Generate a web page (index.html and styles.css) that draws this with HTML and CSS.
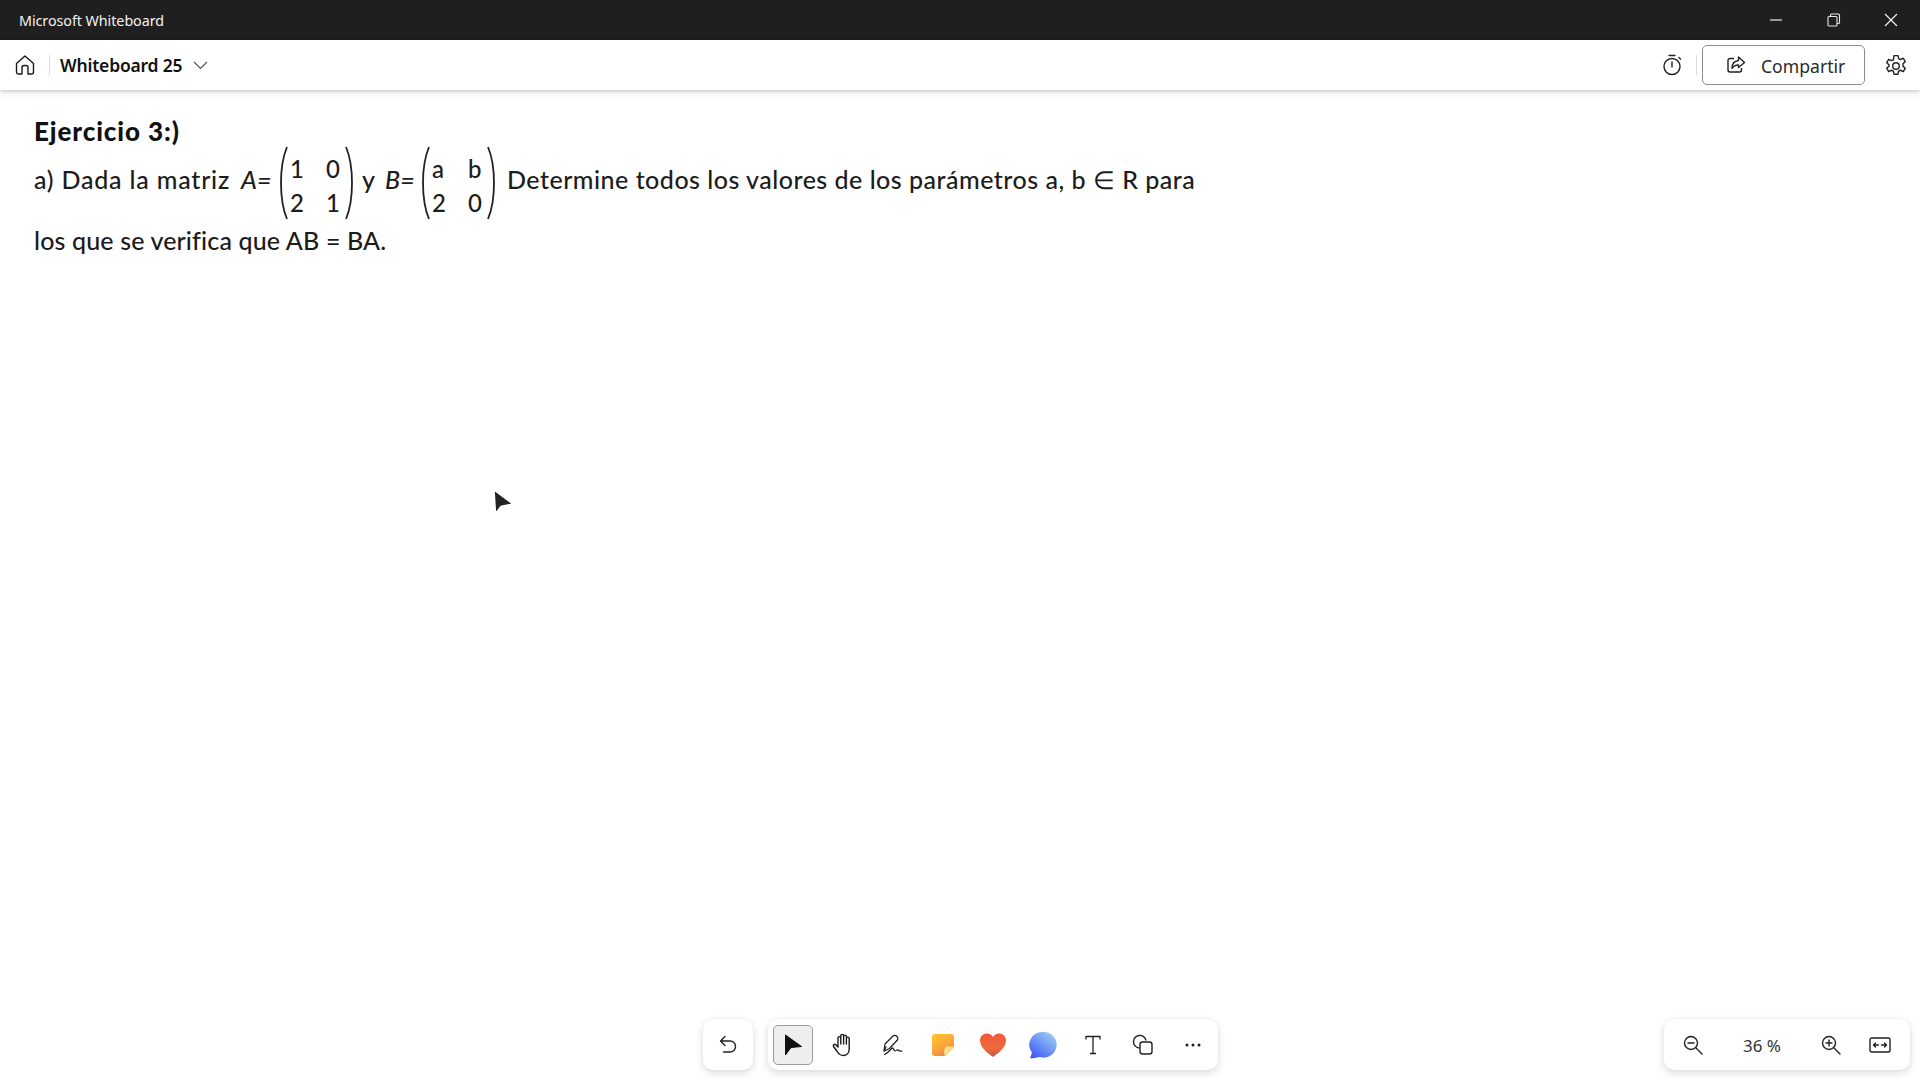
FILE: index.html
```html
<!DOCTYPE html>
<html lang="es">
<head>
<meta charset="utf-8">
<title>Microsoft Whiteboard</title>
<link rel="stylesheet" href="styles.css">
</head>
<body>
<div class="app">
  <header class="titlebar">
    <span class="app-name">Microsoft Whiteboard</span>
    <div class="win-controls">
      <span class="win-btn"><svg width="14" height="14" viewBox="0 0 14 14"><path d="M1 7h12" stroke="#d8d8d8" stroke-width="1.3"/></svg></span>
      <span class="win-btn"><svg width="14" height="14" viewBox="0 0 14 14" fill="none" stroke="#e8e8e8" stroke-width="1.1"><rect x="1" y="3.5" width="9" height="9.5" rx="1"/><path d="M3.5 3.5V2a1 1 0 0 1 1-1h7a1 1 0 0 1 1 1v7.500a1 1 0 0 1-1 1H10"/></svg></span>
      <span class="win-btn"><svg width="14" height="14" viewBox="0 0 14 14"><path d="M1 1l12 12M13 1L1 13" stroke="#f0f0f0" stroke-width="1.2"/></svg></span>
    </div>
  </header>
  <nav class="appbar">
    <svg class="home" width="20" height="22" viewBox="0 0 20 22" fill="none" stroke="#1a1a1a" stroke-width="1.4" stroke-linejoin="round"><path d="M1.500 9.500 10 2l8.500 7.500V18a2 2 0 0 1-2 2H13v-6.500a2 2 0 0 0-2-2H9a2 2 0 0 0-2 2V20H3.500a2 2 0 0 1-2-2z"/></svg>
    <span class="sep"></span>
    <span class="board-name">Whiteboard 25</span>
    <svg class="chev" width="15" height="9" viewBox="0 0 15 9" fill="none" stroke="#555" stroke-width="1.2"><path d="M1 1l6.500 6.500L14 1"/></svg>
    <span class="spacer"></span>
    <svg class="timer" width="20" height="22" viewBox="0 0 20 22" fill="none" stroke="#1f1f1f" stroke-width="1.4"><circle cx="10" cy="12.500" r="8"/><path d="M10 8v5M7 1.500h6M17 3.500l1.500 1.500" stroke-linecap="round"/></svg>
    <span class="sep sep-right"></span>
    <button class="share">
      <svg width="20" height="20" viewBox="0 0 20 20" fill="none" stroke="#222" stroke-width="1.4" stroke-linejoin="round"><path d="M8 3.500H4a2 2 0 0 0-2 2V15a2 2 0 0 0 2 2h9.500a2 2 0 0 0 2-2v-2"/><path d="M12.500 2 18.500 7.500 12.500 12.500V10c-3 0-5 1-6.500 3.500 0-4.500 2.500-7.500 6.500-8z"/></svg>
      <span>Compartir</span>
    </button>
    <svg class="gear" width="24" height="24" viewBox="0 0 22 22" fill="none" stroke="#222" stroke-width="1.3" stroke-linejoin="round"><circle cx="11" cy="11" r="3"/><path d="M9.200 1.500h3.600l.6 2.800 1.700.8 2.600-1.200 1.800 3.100-2.100 1.900v2.200l2.100 1.900-1.800 3.100-2.600-1.200-1.700.8-.6 2.800H9.200l-.6-2.800-1.700-.8-2.600 1.200-1.800-3.100 2.100-1.900V9.900L2.500 8l1.800-3.100 2.600 1.200 1.700-.8z"/></svg>
  </nav>
  <main class="canvas">
    <h1 class="ex-title">Ejercicio 3:)</h1>
    <div class="ex-line">
      <span class="t-intro">a) Dada la matriz</span>
      <span class="t-var t-a">A=</span>
      <div class="matrix">
        <svg class="paren" width="12" height="74" viewBox="0 0 12 74" fill="none" stroke="#222" stroke-width="1.800"><path d="M9 1C1 20 1 54 9 73"/></svg>
        <div class="cells"><span>1</span><span>0</span><span>2</span><span>1</span></div>
        <svg class="paren" width="12" height="74" viewBox="0 0 12 74" fill="none" stroke="#222" stroke-width="1.800"><path d="M3 1C11 20 11 54 3 73"/></svg>
      </div>
      <span class="t-y">y</span>
      <span class="t-var t-b">B=</span>
      <div class="matrix">
        <svg class="paren" width="12" height="74" viewBox="0 0 12 74" fill="none" stroke="#222" stroke-width="1.800"><path d="M9 1C1 20 1 54 9 73"/></svg>
        <div class="cells"><span>a</span><span>b</span><span>2</span><span>0</span></div>
        <svg class="paren" width="12" height="74" viewBox="0 0 12 74" fill="none" stroke="#222" stroke-width="1.800"><path d="M3 1C11 20 11 54 3 73"/></svg>
      </div>
      <span class="t-rest">Determine todos los valores de los parámetros a, b ∈ R para</span>
    </div>
    <p class="ex-last">los que se verifica que AB = BA.</p>

    <svg class="pointer" width="28" height="30" viewBox="0 0 28 30"><path d="M5 2 24 16 12 18.500 6.500 25.500z" fill="#222" stroke="#fff" stroke-width="1.500"/></svg>

    <div class="tool-card undo">
      <svg width="20" height="20" viewBox="0 0 20 20" fill="none" stroke="#222" stroke-width="1.400" stroke-linecap="round" stroke-linejoin="round"><path d="M7 1.500 2.500 6 7 10.500M2.500 6h9.500a5.500 5.500 0 0 1 0 11H5.500"/></svg>
    </div>
    <div class="tool-card tools">
      <span class="tool active"><svg width="20" height="22" viewBox="0 0 20 22"><path d="M2.500 1 18.500 12.500 8 13.500 2.500 21z" fill="#111" stroke="#111" stroke-linejoin="round"/></svg></span>
      <span class="tool"><svg width="22" height="24" viewBox="0 0 22 24" fill="none" stroke="#1a1a1a" stroke-width="1.400" stroke-linejoin="round" stroke-linecap="round"><path d="M6 14V5a1.400 1.400 0 0 1 2.800 0v6M8.800 11V2.800a1.400 1.400 0 0 1 2.800 0V11M11.600 11V3.500a1.400 1.400 0 0 1 2.800 0V11M14.400 11V5.500a1.400 1.400 0 0 1 2.800 0V16c0 4-2.500 6.500-6 6.500-3 0-4.500-1.500-6-4L1.500 13.500c-.8-1.500 1-2.800 2.300-1.800L6 14"/></svg></span>
      <span class="tool"><svg width="22" height="24" viewBox="0 0 22 22" fill="none" stroke="#1a1a1a" stroke-width="1.200" stroke-linejoin="round" stroke-linecap="round"><path d="M2 17 3 10 11 2c1.800-1.500 5.500 0 4.800 3.500L7.500 14.500z"/><path d="M2 17l2-4M2.500 20.500c3-1 5-4.500 8-6.500 1-.5 1 2.500 2.500 3 1 .3 2-2 3-1 1 1 2 1.300 4 1"/></svg></span>
      <span class="tool"><svg width="24" height="24" viewBox="0 0 24 24"><defs><linearGradient id="ng" x1="0" y1="0" x2=".6" y2="1"><stop offset="0" stop-color="#ffc52f"/><stop offset=".6" stop-color="#fba83a"/><stop offset="1" stop-color="#e8834a"/></linearGradient></defs><path d="M4 1h16a3 3 0 0 1 3 3v10l-9 9H4a3 3 0 0 1-3-3V4a3 3 0 0 1 3-3z" fill="url(#ng)"/><path d="M23 13.500 13.500 23c-1-4 0-9 2-9.500z" fill="#fde08a"/></svg></span>
      <span class="tool"><svg width="28" height="26" viewBox="0 0 28 26"><defs><linearGradient id="hg" x1="0" y1="0" x2="0" y2="1"><stop offset="0" stop-color="#f4583a"/><stop offset=".65" stop-color="#ec6a3a"/><stop offset="1" stop-color="#c4544c"/></linearGradient></defs><path d="M14 25C7 20 1 15 1 8.500 1 4 4.500 1.500 8 1.500c2.500 0 4.800 1.200 6 3.500 1.200-2.300 3.500-3.500 6-3.500 3.500 0 7 2.500 7 7C27 15 21 20 14 25z" fill="url(#hg)"/></svg></span>
      <span class="tool"><svg width="28" height="28" viewBox="0 0 28 28"><defs><linearGradient id="cg" x1=".9" y1="0" x2=".1" y2="1"><stop offset="0" stop-color="#a3d4f2"/><stop offset=".5" stop-color="#6d96f5"/><stop offset="1" stop-color="#3c52f0"/></linearGradient></defs><path d="M14.500 1a12.800 12.800 0 1 1-3.500 25L2.500 27.500c-1 0-1.300-.7-1-1.500L3 21.500A12.800 12.800 0 0 1 14.500 1z" fill="url(#cg)"/></svg></span>
      <span class="tool"><svg width="18" height="20" viewBox="0 0 18 20" fill="none" stroke="#222" stroke-width="1.300"><path d="M2 4.500V1.500h14v3M9 1.500v17M6 18.500h6"/></svg></span>
      <span class="tool"><svg width="22" height="22" viewBox="0 0 22 22" fill="none" stroke="#222" stroke-width="1.400"><path d="M7.500 14A6.300 6.300 0 1 1 14 6.500"/><rect x="8" y="8" width="12" height="12" rx="2.500"/></svg></span>
      <span class="tool"><svg width="16" height="4" viewBox="0 0 16 4" fill="#222"><circle cx="2" cy="2" r="1.500"/><circle cx="8" cy="2" r="1.500"/><circle cx="14" cy="2" r="1.500"/></svg></span>
    </div>
    <div class="tool-card zoom">
      <svg width="20" height="20" viewBox="0 0 20 20" fill="none" stroke="#222" stroke-width="1.400" stroke-linecap="round"><circle cx="8" cy="8" r="6.500"/><path d="M5 8h6M13 13l6 6"/></svg>
      <span class="zoom-val">36 %</span>
      <svg width="20" height="20" viewBox="0 0 20 20" fill="none" stroke="#222" stroke-width="1.400" stroke-linecap="round"><circle cx="8" cy="8" r="6.500"/><path d="M5 8h6M8 5v6M13 13l6 6"/></svg>
      <svg class="fit" width="22" height="16" viewBox="0 0 22 16" fill="none" stroke="#222" stroke-width="1.400" stroke-linecap="round" stroke-linejoin="round"><rect x="1" y="1" width="20" height="14" rx="1.800"/><path d="M4.500 8h5M4.500 8l2-2M4.500 8l2 2M12.500 8h5M17.500 8l-2-2M17.500 8l-2 2"/></svg>
    </div>
  </main>
</div>
</body>
</html>
```
FILE: styles.css
```css
* { box-sizing: border-box; }
html, body { margin: 0; height: 100%; }
body { background: #fff; font-family: "Noto Sans", "Open Sans", sans-serif; overflow: hidden; }

.app { width: 1920px; height: 1080px; display: flex; flex-direction: column; }

.titlebar {
  height: 40px; background: #1f1f1f; color: #f2f2f2;
  display: flex; align-items: center; justify-content: space-between;
  padding-left: 19px; flex: none;
}
.app-name { font-size: 14.300px; letter-spacing: -0.05px; }
.win-controls { display: flex; }
.win-btn { width: 57.500px; height: 40px; display: flex; align-items: center; justify-content: center; }

.appbar {
  height: 50px; background: #fff; flex: none; position: relative; z-index: 2;
  display: flex; align-items: center; padding: 0 12px 0 15px;
  box-shadow: 0 1px 4px rgba(0,0,0,.22), 0 4px 10px rgba(0,0,0,.05);
}
.sep { width: 1px; height: 20px; background: #dcdcdc; margin: 0 10px 0 14px; }
.board-name { font-size: 17.500px; font-weight: 600; color: #111; letter-spacing: -0.2px; }
.chev { margin-left: 11px; margin-top: 1px; }
.spacer { flex: 1; }
.sep-right { margin: 0 5px 0 14px; }
.share {
  width: 163px; height: 40px; margin: 0; padding: 0 0 0 23px;
  display: flex; align-items: center; gap: 15px;
  background: #fff; border: 1px solid #8c8c8c; border-radius: 5px;
  font: 400 17.600px "Noto Sans", sans-serif; color: #2a2a2a;
}
.share span { padding-top: 1px; }
.gear { margin-left: 19px; margin-right: 0; margin-top: 1px; }

.canvas { flex: 1; position: relative; background: #fff; padding: 31px 0 0 34px; color: #1c1c1c; font-family: "Lato", "Noto Sans", sans-serif; }

.ex-title { margin: 0; height: 20px; font-size: 26px; line-height: 20px; font-weight: 900; letter-spacing: 0.9px; color: #111; }
.ex-line { display: flex; align-items: center; height: 76px; font-size: 25px; font-weight: 500; white-space: nowrap; }
.t-intro { width: 207px; letter-spacing: 0.8px; }
.t-var { font-style: italic; width: 37px; }
.t-y { width: 23px; }
.t-b { width: 35px; }
.t-rest { margin-left: 3px; letter-spacing: 0.5px; }

.matrix { display: flex; align-items: center; flex: none; width: 77px; margin: 7px 7px 0 0; }
.paren { flex: none; }
.matrix .paren:last-child { margin-left: -2px; }
.cells { display: grid; grid-template-columns: 36px 19px; grid-auto-rows: 34px; flex: none; font-size: 24px; padding-top: 7px; line-height: 34px; }

.ex-last { margin: 5px 0 0; font-size: 25px; font-weight: 500; letter-spacing: 0.15px; line-height: 36px; }

.pointer { position: absolute; left: 489px; top: 398px; }

.tool-card {
  position: absolute; top: 929px; height: 51px; padding-top: 1px; background: #fff; border-radius: 10px;
  box-shadow: 0 3px 9px rgba(0,0,0,.14), 0 0 3px rgba(0,0,0,.04);
  display: flex; align-items: center;
}
.undo { left: 703px; width: 50px; justify-content: center; }
.tools { left: 768px; width: 450px; padding-left: 5px; gap: 10px; }
.tool { width: 40px; height: 40px; display: flex; align-items: center; justify-content: center; border-radius: 5px; border: 1px solid transparent; flex: none; }
.tool.active { background: #eeeeee; border-color: #9a9a9a; }
.zoom { left: 1664px; width: 246px; padding-left: 19px; }
.zoom-val { width: 98px; margin: 0 10px; text-align: center; font-family: "Noto Sans", sans-serif; font-size: 17px; color: #333; }
.fit { margin-left: 28px; }
```
